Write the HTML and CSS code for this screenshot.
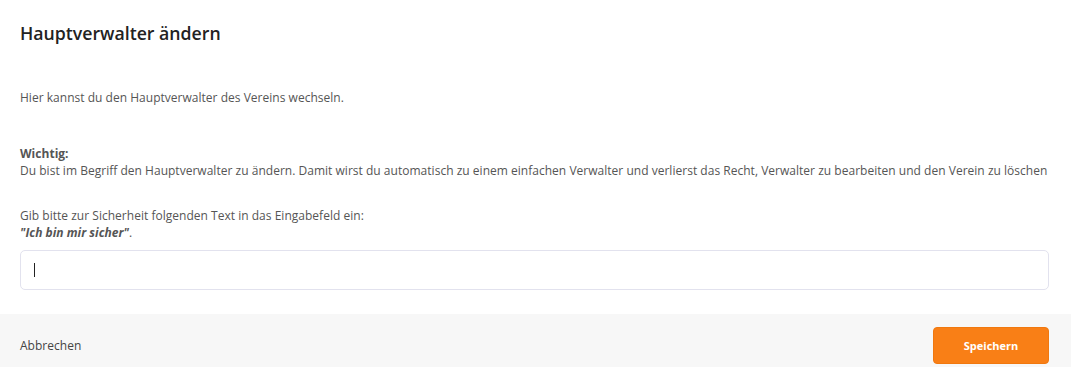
FILE: index.html
```html
<!DOCTYPE html>
<html lang="de">
<head>
<meta charset="utf-8">
<link rel="stylesheet" href="styles.css">
</head>
<body>
<div class="modal">
  <div class="body">
    <h1 class="title">Hauptverwalter ändern</h1>
    <p class="intro">Hier kannst du den Hauptverwalter des Vereins wechseln.</p>
    <div class="warning">
      <div class="warn-label">Wichtig:</div>
      <div class="warn-text">Du bist im Begriff den Hauptverwalter zu ändern. Damit wirst du automatisch zu einem einfachen Verwalter und verlierst das Recht, Verwalter zu bearbeiten und den Verein zu löschen</div>
    </div>
    <div class="confirm">
      <div>Gib bitte zur Sicherheit folgenden Text in das Eingabefeld ein:</div>
      <div><b><i>"Ich bin mir sicher"</i></b>.</div>
    </div>
    <div class="field"><span class="caret"></span></div>
  </div>
  <div class="footer">
    <span class="cancel">Abbrechen</span>
    <button class="save">Speichern</button>
  </div>
</div>
</body>
</html>
```
FILE: styles.css
```css
* { box-sizing: border-box; }
html, body { margin: 0; padding: 0; background: #fff; }
body { font-family: "Open Sans", "Noto Sans", sans-serif; color: #555; font-size: 12px; letter-spacing: 0.02px; }
.modal { width: 1071px; height: 367px; display: flex; flex-direction: column; overflow: hidden; }
.body { padding: 20px 22px 24px 20px; display: flex; flex-direction: column; }
.title { margin: 0; font-size: 17.7px; font-weight: 600; color: #222; line-height: 26px; letter-spacing: 0; }
.intro { margin: 43px 0 0; line-height: 17px; }
.warning { margin-top: 39px; line-height: 17px; }
.warn-label { font-weight: 700; }
.warn-text { white-space: nowrap; }
.confirm { margin-top: 28px; line-height: 17px; }
.field { margin-top: 9px; height: 40px; border: 1px solid #e2e2ee; border-radius: 5px; display: flex; align-items: center; padding-left: 13px; }
.caret { width: 1px; height: 14px; background: #222; }
.footer { height: 60px; flex-shrink: 0; background: #f7f7f7; display: flex; align-items: flex-start; justify-content: space-between; padding: 13px 22px 0 20px; }
.cancel { color: #444; font-size: 12px; line-height: 37px; }
.save { width: 116px; height: 37px; border: 1px solid #f0780f; border-radius: 4px; background: #f97f16; color: #fff; font-family: "Open Sans", sans-serif; font-weight: 700; font-size: 11px; }
```
